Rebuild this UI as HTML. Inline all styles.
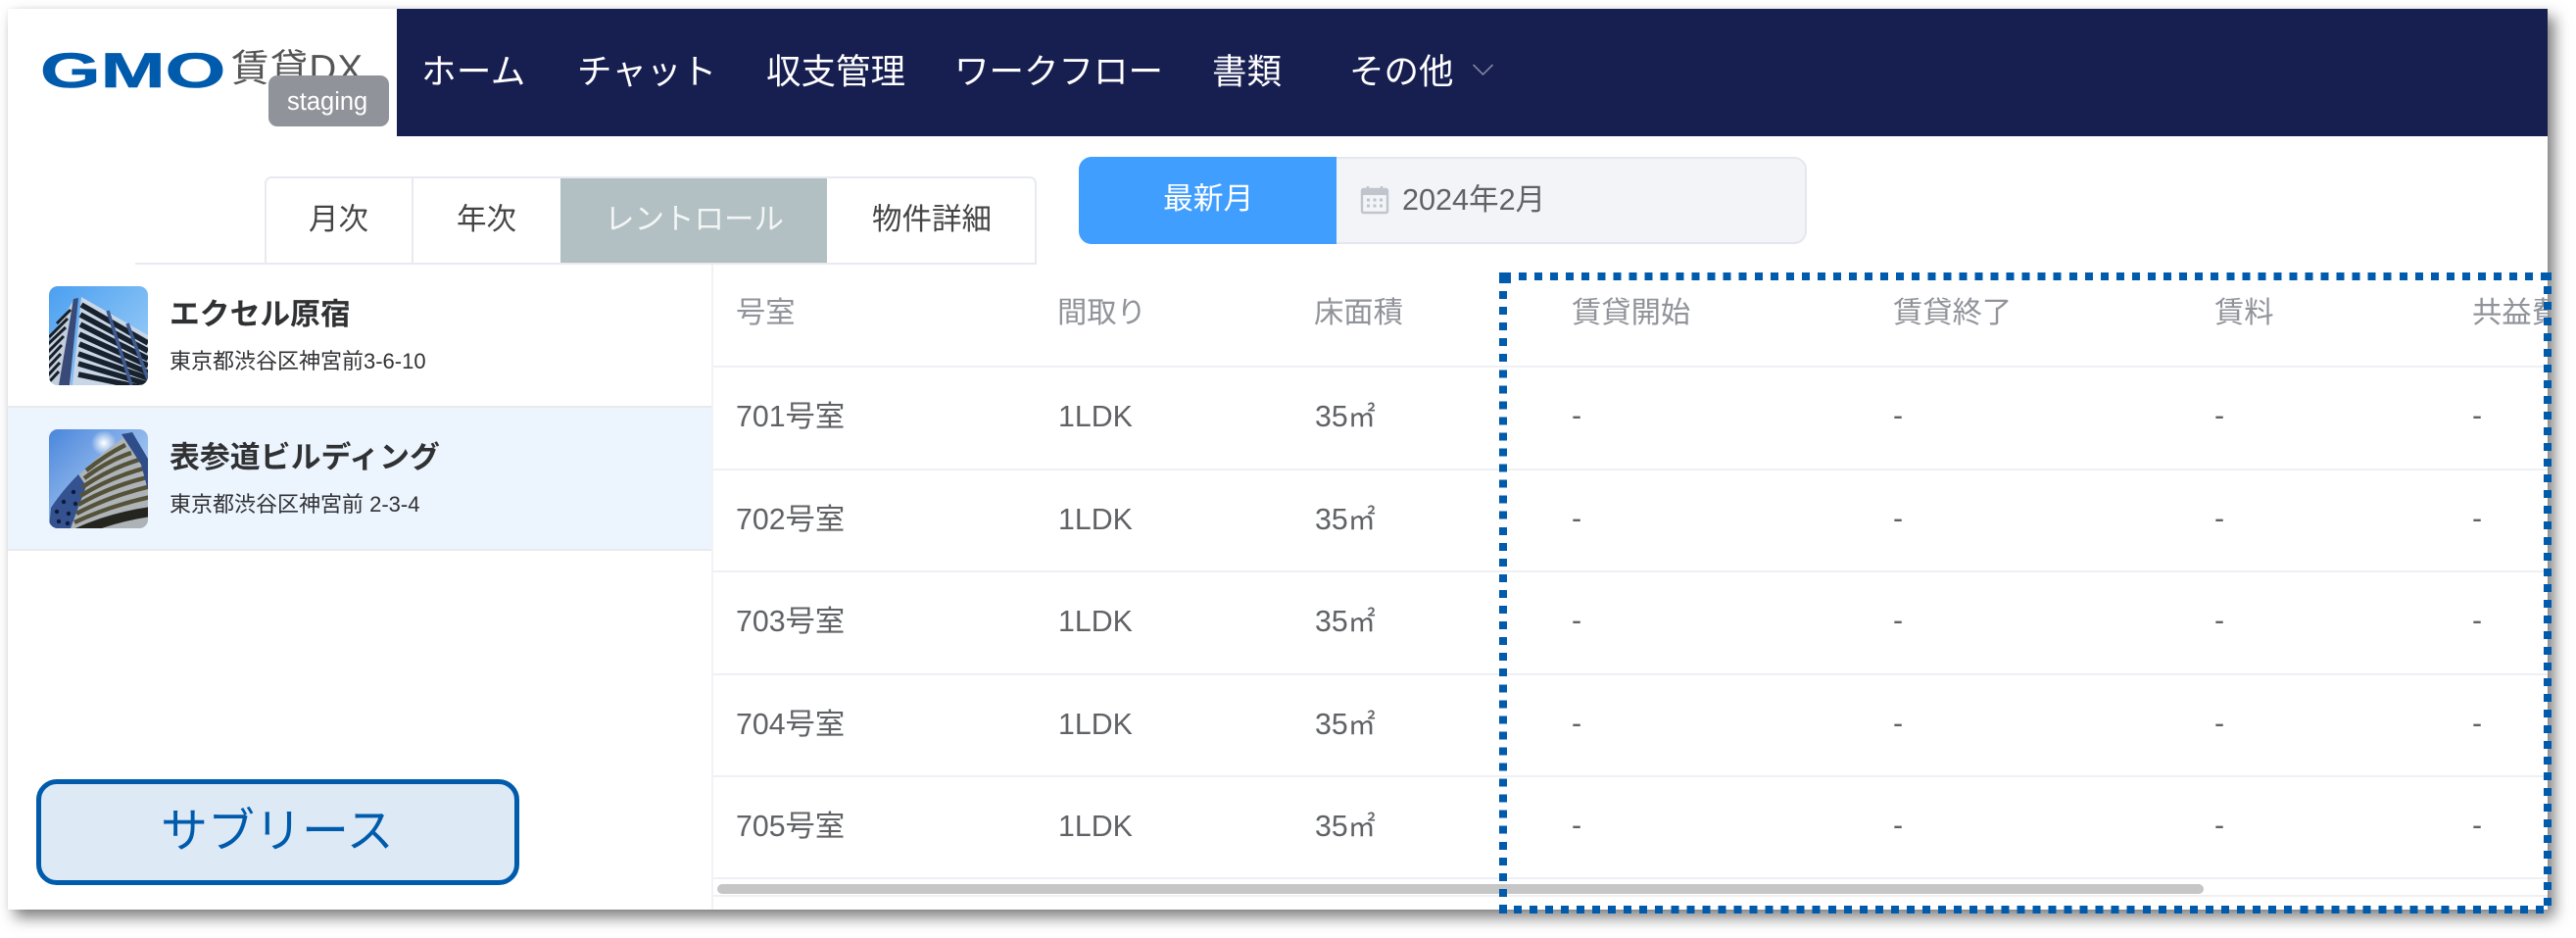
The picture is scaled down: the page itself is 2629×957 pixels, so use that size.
<!DOCTYPE html>
<html lang="ja"><head><meta charset="utf-8"><title>GMO賃貸DX</title>
<style>
html,body{margin:0;padding:0;background:#fff}
body{width:2629px;height:957px;overflow:hidden;position:relative;font-family:"Liberation Sans","Noto Sans CJK JP",sans-serif}
.abs{position:absolute}
#card{position:absolute;left:8px;top:9px;width:2592px;height:919px;background:#fff;box-shadow:7px 8px 14px rgba(0,0,0,.5),0 0 4px rgba(0,0,0,.06)}
.t{position:absolute;white-space:nowrap;line-height:40px;height:40px}
.n{font-size:35.500px;color:#fff;top:53px}
.tab{font-size:30.500px;color:#444;top:204px}
.h{font-size:30.300px;color:#909399;top:300px}
.c{font-size:30.300px;color:#606266}
.c small{font-size:28px}
.line{position:absolute;background:#eff0f5;height:2px}
</style></head><body>
<div id="card"></div>

<!-- header -->
<div class="abs" style="left:405px;top:9px;width:2195px;height:130px;background:#171e50"></div>
<div class="t" style="left:41px;top:47px;font-size:50px;line-height:50px;height:50px;font-weight:700;color:#005bac;transform:scaleX(1.585);transform-origin:0 50%;-webkit-text-stroke:.6px #005bac">GMO</div>
<div class="t" style="left:236px;top:51px;font-size:38.500px;color:#555;letter-spacing:1.200px">賃貸DX</div>
<div class="abs" style="left:274px;top:77px;width:123px;height:52px;background:#909399;border-radius:9px"></div>
<div class="t" style="left:293px;top:84px;font-size:25.500px;color:#fff">staging</div>
<div class="t n" style="left:430px;letter-spacing:.4px">ホーム</div>
<div class="t n" style="left:589px;letter-spacing:.2px">チャット</div>
<div class="t n" style="left:782px">収支管理</div>
<div class="t n" style="left:974px">ワークフロー</div>
<div class="t n" style="left:1237px">書類</div>
<div class="t n" style="left:1377px">その他</div>
<svg class="abs" style="left:1500px;top:62px" width="28" height="18"><polyline points="3.5,4 13.5,14 23.5,4" fill="none" stroke="#7f849c" stroke-width="1.6"/></svg>

<!-- tabs -->
<div class="abs" style="left:138px;top:268px;width:920px;height:2px;background:#e8eaf0"></div>
<div class="abs" style="left:270px;top:180px;width:788px;height:89px;box-sizing:border-box;border:2px solid #e8eaf0;border-bottom:0;border-radius:7px 7px 0 0"></div>
<div class="abs" style="left:420px;top:182px;width:2px;height:86px;background:#e8eaf0"></div>
<div class="abs" style="left:572px;top:182px;width:272px;height:86px;background:#b2c0c3"></div>
<div class="t tab" style="left:315px">月次</div>
<div class="t tab" style="left:466px">年次</div>
<div class="t tab" style="left:617px;color:#f4f6f6">レントロール</div>
<div class="t tab" style="left:890px">物件詳細</div>

<!-- date -->
<div class="abs" style="left:1101px;top:160px;width:743px;height:89px;box-sizing:border-box;background:#f2f4f8;border:2px solid #e4e7ed;border-radius:13px"></div>
<div class="abs" style="left:1101px;top:160px;width:263px;height:89px;background:#409eff;border-radius:13px 0 0 13px"></div>
<div class="t" style="left:1187px;top:183px;font-size:30.800px;color:#fff">最新月</div>
<svg class="abs" style="left:1388px;top:189px" width="30" height="30" fill="none"><rect x="2" y="4" width="26" height="24" rx="1.5" stroke="#c0c4cc" stroke-width="2.4"/><rect x="2" y="4" width="26" height="6" fill="#c0c4cc"/><path d="M8 1v6M22 1v6" stroke="#c0c4cc" stroke-width="2.4"/><path d="M7 15h3M13.500 15h3M20 15h3M7 21h3M13.500 21h3M20 21h3" stroke="#c0c4cc" stroke-width="3"/></svg>
<div class="t" style="left:1431px;top:184px;font-size:30.600px;color:#606266">2024年2月</div>

<!-- sidebar -->
<div class="abs" style="left:8px;top:415px;width:719px;height:147px;background:#ecf4fe"></div>
<div class="abs" style="left:8px;top:414px;width:719px;height:2px;background:#e8eaee"></div>
<div class="abs" style="left:8px;top:560px;width:719px;height:2px;background:#e8eaee"></div>
<div class="abs" style="left:726px;top:270px;width:2px;height:658px;background:#f1f2f6"></div>

<svg class="abs" style="left:50px;top:292px" width="101" height="101" viewBox="0 0 101 101">
<defs>
<clipPath id="r1"><rect width="101" height="101" rx="9"/></clipPath>
<linearGradient id="s1" x1="0" y1="0" x2="1" y2="1"><stop offset="0" stop-color="#4a9ff0"/><stop offset="1" stop-color="#a5d3f8"/></linearGradient>
<linearGradient id="s2" x1="0" y1="0" x2="1" y2="1"><stop offset="0" stop-color="#4a86dc"/><stop offset=".7" stop-color="#a8c8f0"/></linearGradient>
<radialGradient id="sun"><stop offset="0" stop-color="#fff"/><stop offset="1" stop-color="#fff" stop-opacity="0"/></radialGradient>
</defs>
<g clip-path="url(#r1)">
<rect width="101" height="101" fill="url(#s1)"/>
<polygon points="24,16 0,56 0,101 22,101" fill="#c3cedc"/>
<g stroke="#171e28" stroke-width="3"><path d="M22 24L8 38M19 33L0 52M17 42L-2 60M15 51L-2 68M13 60L-2 76M12 69L-2 84M11 78L-2 92M10 87L-2 100"/></g>
<polygon points="33,11 101,50 101,101 24,101" fill="#c9d6e6"/>
<g stroke="#18222e" stroke-width="5.600"><path d="M33 19L101 58M32 29L101 66M32 39L101 74M31 49L101 81M31 59L101 88M30 69L101 94M30 79L101 100M30 90L92 103"/></g>
<polygon points="25,13 30,12 21,101 10,101" fill="#3a4a78"/>
<path d="M60 25L84 101M80 38L101 95" stroke="#3f5a8e" stroke-width="3.500"/>
</g></svg>

<svg class="abs" style="left:50px;top:438px" width="101" height="101" viewBox="0 0 101 101">
<defs><clipPath id="r2"><rect width="101" height="101" rx="9"/></clipPath></defs>
<g clip-path="url(#r2)">
<rect width="101" height="101" fill="url(#s2)"/>
<circle cx="56" cy="14" r="13" fill="url(#sun)"/>
<path d="M0 101L2 80Q22 52 58 22L82 4L101 32V101Z" fill="#aeb3b8"/>
<path d="M0 101L2 80Q14 62 30 46L38 58L22 101Z" fill="#33528f"/>
<g fill="#0e1a3a"><circle cx="8" cy="84" r="2.200"/><circle cx="15" cy="74" r="2.200"/><circle cx="10" cy="94" r="2.200"/><circle cx="20" cy="86" r="2.200"/><circle cx="25" cy="64" r="2.200"/><circle cx="19" cy="96" r="2.200"/><circle cx="27" cy="76" r="2.200"/></g>
<g fill="none" stroke="#55523a" stroke-width="4.400"><path d="M38 42Q58 26 78 16"/><path d="M36 50Q60 32 84 24"/><path d="M34 59Q62 40 92 31"/><path d="M32 68Q62 49 100 39"/><path d="M30 77Q62 58 104 48"/><path d="M28 86Q62 68 104 58"/><path d="M26 95Q62 78 104 69"/></g>
<path d="M28 106Q62 90 104 84" fill="none" stroke="#25251f" stroke-width="10"/>
<path d="M74 5L85 3L101 30V62L94 36Z" fill="#2f4d88"/>
</g></svg>

<div class="t" style="left:173px;top:301px;font-size:30.800px;font-weight:700;color:#2f3133">エクセル原宿</div>
<div class="t" style="left:173px;top:349px;font-size:22px;color:#303133">東京都渋谷区神宮前3-6-10</div>
<div class="t" style="left:173px;top:447px;font-size:30.900px;font-weight:700;color:#2f3133">表参道ビルディング</div>
<div class="t" style="left:173px;top:495px;font-size:22px;color:#303133">東京都渋谷区神宮前 2-3-4</div>

<div class="abs" style="left:37px;top:795px;width:493px;height:108px;box-sizing:border-box;background:#dde9f5;border:5px solid #005bac;border-radius:21px"></div>
<div class="t" style="left:164px;top:829px;font-size:48px;line-height:40px;color:#005bac">サブリース</div>

<!-- table -->
<div class="line" style="left:728px;top:373px;width:1872px"></div>
<div class="line" style="left:728px;top:478px;width:1872px"></div>
<div class="line" style="left:728px;top:582px;width:1872px"></div>
<div class="line" style="left:728px;top:687px;width:1872px"></div>
<div class="line" style="left:728px;top:791px;width:1872px"></div>
<div class="line" style="left:728px;top:895px;width:1872px"></div>
<div class="line" style="left:728px;top:913px;width:1872px"></div>
<div class="abs" style="left:732px;top:902px;width:1517px;height:10px;background:#c6c6c6;border-radius:5px"></div>

<div class="t h" style="left:751px">号室</div>
<div class="t h" style="left:1079px">間取り</div>
<div class="t h" style="left:1341px">床面積</div>
<div class="t h" style="left:1604px">賃貸開始</div>
<div class="t h" style="left:1932px">賃貸終了</div>
<div class="t h" style="left:2260px">賃料</div>
<div class="abs" style="left:2523px;top:300px;width:77px;height:40px;overflow:hidden"><div class="t h" style="left:0;top:0">共益費</div></div>

<div class="t c" style="left:751px;top:406px">701号室</div><div class="t c" style="left:1080px;top:406px">1LDK</div><div class="t c" style="left:1342px;top:406px">35<small>㎡</small></div><div class="t c" style="left:1604px;top:405px">-</div><div class="t c" style="left:1932px;top:405px">-</div><div class="t c" style="left:2260px;top:405px">-</div><div class="t c" style="left:2523px;top:405px">-</div>
<div class="t c" style="left:751px;top:511px">702号室</div><div class="t c" style="left:1080px;top:511px">1LDK</div><div class="t c" style="left:1342px;top:511px">35<small>㎡</small></div><div class="t c" style="left:1604px;top:510px">-</div><div class="t c" style="left:1932px;top:510px">-</div><div class="t c" style="left:2260px;top:510px">-</div><div class="t c" style="left:2523px;top:510px">-</div>
<div class="t c" style="left:751px;top:615px">703号室</div><div class="t c" style="left:1080px;top:615px">1LDK</div><div class="t c" style="left:1342px;top:615px">35<small>㎡</small></div><div class="t c" style="left:1604px;top:614px">-</div><div class="t c" style="left:1932px;top:614px">-</div><div class="t c" style="left:2260px;top:614px">-</div><div class="t c" style="left:2523px;top:614px">-</div>
<div class="t c" style="left:751px;top:720px">704号室</div><div class="t c" style="left:1080px;top:720px">1LDK</div><div class="t c" style="left:1342px;top:720px">35<small>㎡</small></div><div class="t c" style="left:1604px;top:719px">-</div><div class="t c" style="left:1932px;top:719px">-</div><div class="t c" style="left:2260px;top:719px">-</div><div class="t c" style="left:2523px;top:719px">-</div>
<div class="t c" style="left:751px;top:824px">705号室</div><div class="t c" style="left:1080px;top:824px">1LDK</div><div class="t c" style="left:1342px;top:824px">35<small>㎡</small></div><div class="t c" style="left:1604px;top:823px">-</div><div class="t c" style="left:1932px;top:823px">-</div><div class="t c" style="left:2260px;top:823px">-</div><div class="t c" style="left:2523px;top:823px">-</div>

<!-- dotted highlight -->
<svg class="abs" style="left:0;top:0;pointer-events:none" width="2629" height="957" fill="none" stroke="#005bac" stroke-width="8" shape-rendering="crispEdges">
<rect x="1530" y="278" width="12" height="11" fill="#005bac" stroke="none"/>
<rect x="2593" y="278" width="11" height="8" fill="#005bac" stroke="none"/>
<path d="M1550 282H2590" stroke-dasharray="8 8.050"/>
<path d="M1534 297V932" stroke-dasharray="8 8.050"/>
<path d="M2600 292V924" stroke-dasharray="8 8"/>
<path d="M2596 928H1538" stroke-dasharray="8 8.050"/>
<rect x="1530" y="923" width="8" height="9" fill="#005bac" stroke="none"/>
</svg>
</body></html>
